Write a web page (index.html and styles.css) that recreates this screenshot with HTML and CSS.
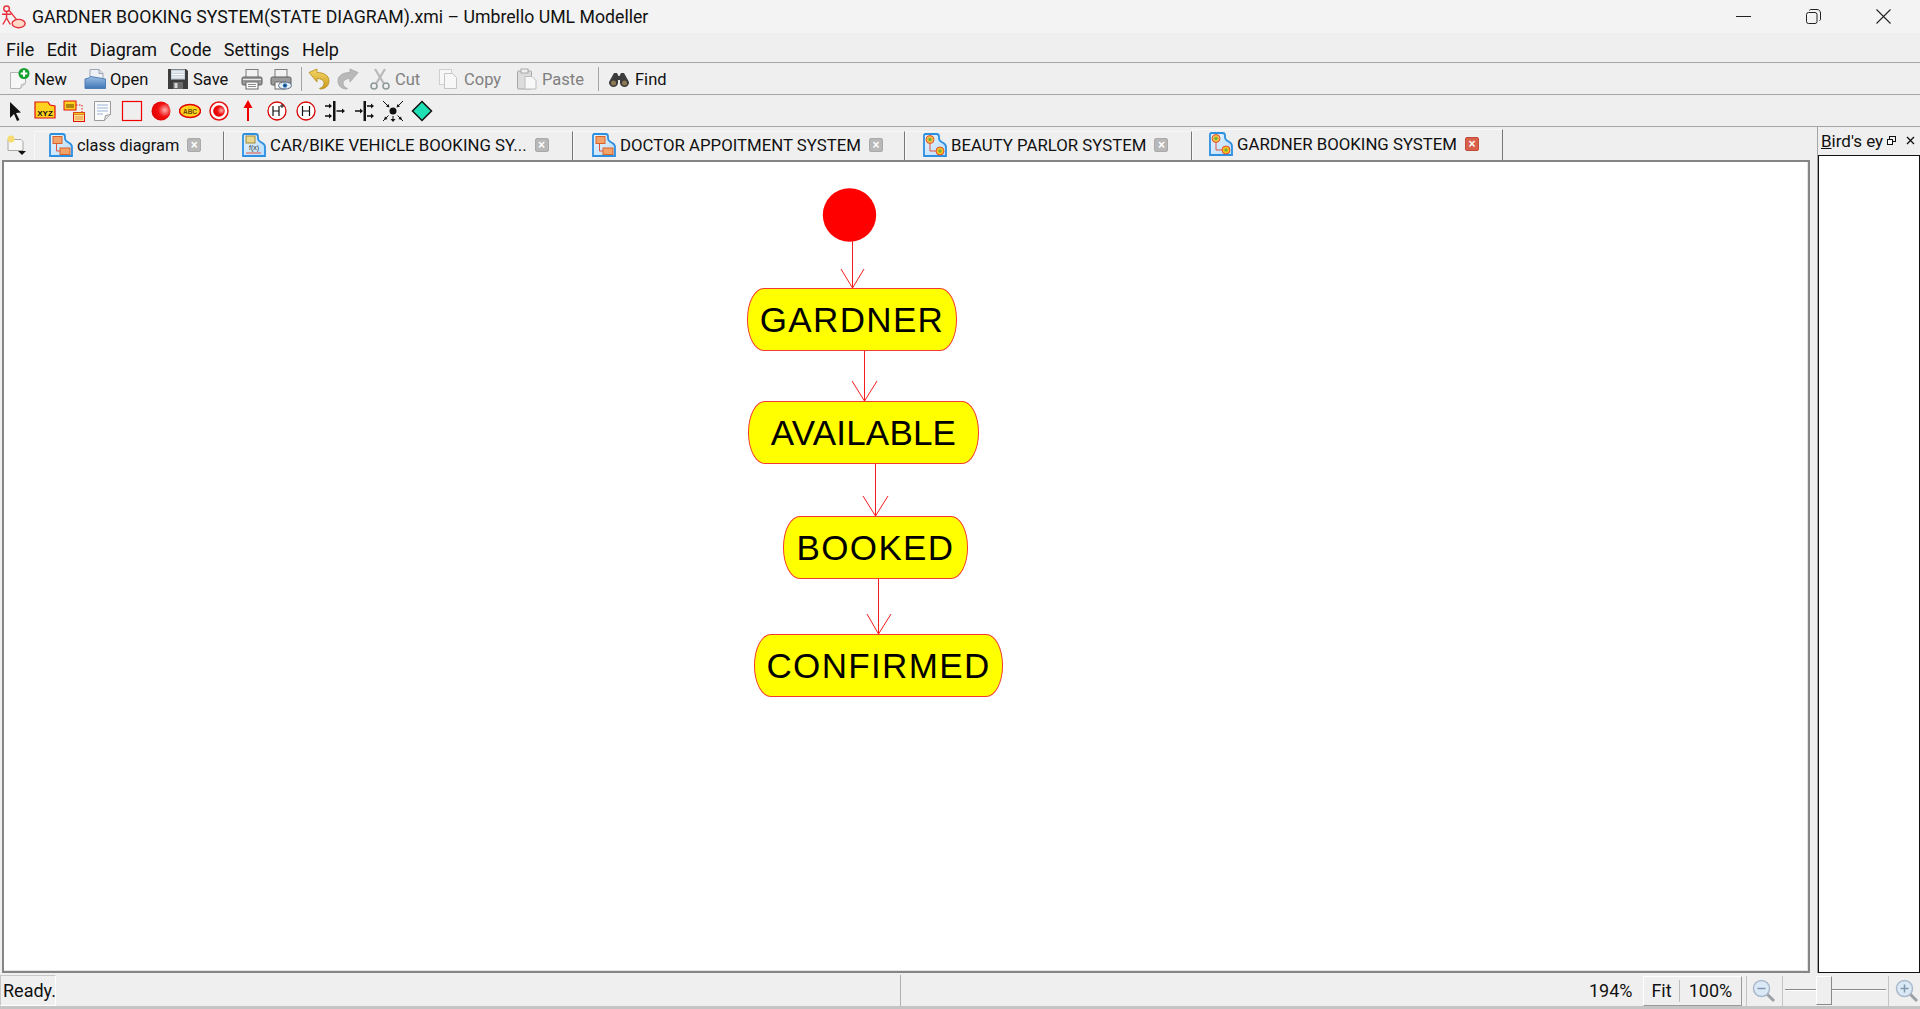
FILE: index.html
```html
<!DOCTYPE html>
<html lang="en">
<head>
    <meta charset="UTF-8">
    <title>GARDNER BOOKING SYSTEM(STATE DIAGRAM).xmi – Umbrello UML Modeller</title>
    <link rel="stylesheet" href="styles.css">
</head>
<body>
    <svg class="defs" width="0" height="0">
        <defs>
            <linearGradient id="folder" x1="0" y1="0" x2="0" y2="1"><stop offset="0" stop-color="#9cc0e6"/><stop offset="1" stop-color="#3f76b4"/></linearGradient>
            <linearGradient id="gold" x1="0" y1="0" x2="0" y2="1"><stop offset="0" stop-color="#f5d667"/><stop offset="1" stop-color="#c99a1c"/></linearGradient>
            <linearGradient id="sky" x1="0" y1="0" x2="1" y2="1"><stop offset="0" stop-color="#e8f4ff"/><stop offset="1" stop-color="#b8dcfa"/></linearGradient>
            <radialGradient id="ball" cx="0.7" cy="0.45" r="0.7"><stop offset="0" stop-color="#ffb0b0"/><stop offset="0.5" stop-color="#f01010"/><stop offset="1" stop-color="#e00000"/></radialGradient>
            <path id="doc-shape" d="M2 1h11.500c1.500 0 2.500 1 2.500 2.500v2c0 2 1.500 3 3.500 4 2 1 3.500 2 3.500 4.500v9H1V2z" fill="url(#sky)" stroke="#2c8fe0" stroke-width="1.800"/>
            <symbol id="i-new" viewBox="0 0 22 22"><path d="M2.500 4.500h11l4 4v7l-5 5h-10z" fill="#f7f7f7" stroke="#b5b5b5"/><path d="M12.500 20.500l1-4 4-1" fill="#e2e2e2" stroke="#b5b5b5"/><circle cx="16" cy="5.500" r="5.500" fill="#12a02c"/><path d="M16 2.200v6.600M12.700 5.500h6.600" stroke="#fff" stroke-width="2.200"/></symbol>
            <symbol id="i-open" viewBox="0 0 22 22"><path d="M6 1.500h9l4 4v9H6z" fill="#eef1f5" stroke="#9aa6b4"/><path d="M15 1.500v4h4" fill="#d5dce4" stroke="#9aa6b4"/><path d="M1 11l4-1 1.500-1.500 15 2.500v9.500H1z" fill="url(#folder)" stroke="#4f7fb6"/></symbol>
            <symbol id="i-save" viewBox="0 0 22 22"><path d="M1 1h18l2 2v18H1z" fill="#3d3d3d"/><rect x="4" y="1.500" width="14" height="10" fill="#c9d3dc"/><path d="M5 4h12M5 6.500h12M5 9h12" stroke="#fff"/><rect x="6" y="14" width="10" height="7" fill="#6a6a6a"/><rect x="7.500" y="15" width="3" height="5" fill="#d9d9d9"/></symbol>
            <symbol id="i-print" viewBox="0 0 22 22"><rect x="5" y="1.500" width="12" height="8" fill="#f2f2f2" stroke="#7d7d7d"/><rect x="1" y="9" width="20" height="8" rx="1.500" fill="#9a9a9a" stroke="#5d5d5d"/><path d="M2 11.500h18" stroke="#e8e8e8"/><rect x="5" y="14" width="12" height="7" fill="#fafafa" stroke="#6a6a6a"/><path d="M7 16.500h8M7 18.500h8" stroke="#8a8a8a"/></symbol>
            <symbol id="i-preview" viewBox="0 0 22 22"><rect x="5" y="1.500" width="12" height="8" fill="#f2f2f2" stroke="#7d7d7d"/><rect x="1" y="9" width="20" height="8" rx="1.500" fill="#9a9a9a" stroke="#5d5d5d"/><rect x="5" y="14" width="10" height="7" fill="#fafafa" stroke="#6a6a6a"/><ellipse cx="15" cy="17.500" rx="6.500" ry="3.500" fill="#e8f0f8" stroke="#536a82"/><circle cx="15" cy="17.500" r="2.300" fill="#2f7cc4"/><circle cx="15" cy="17.500" r=".9" fill="#10283f"/></symbol>
            <symbol id="i-undo" viewBox="0 0 22 22"><path d="M1 4.500l8-3.500v3.500c7 0 12 3 12 8.500 0 5-4 8-8.500 8l-1-.5c3-1 4.500-3 4.500-5.500s-3-4.500-7-4.500v3.500z" fill="url(#gold)" stroke="#b58a16" stroke-width=".8"/></symbol>
            <symbol id="i-redo" viewBox="0 0 22 22"><path d="M21 4.500l-8-3.500v3.500c-7 0-12 3-12 8.500 0 5 4 8 8.500 8l1-.5c-3-1-4.500-3-4.500-5.500s3-4.500 7-4.500v3.500z" fill="#b9b9b9" stroke="#a5a5a5" stroke-width=".8"/></symbol>
            <symbol id="i-cut" viewBox="0 0 22 22"><path d="M6 1l8.500 14M16 1L7.500 15" stroke="#b8b8b8" stroke-width="2.200" fill="none"/><circle cx="5" cy="18" r="3" fill="none" stroke="#8f9a9a" stroke-width="1.600"/><circle cx="17" cy="18" r="3" fill="none" stroke="#8f9a9a" stroke-width="1.600"/></symbol>
            <symbol id="i-copy" viewBox="0 0 22 22"><rect x="1.500" y="1.500" width="12" height="15" fill="#f7f7f7" stroke="#cfcfcf"/><path d="M6.500 5.500h8l4 4v11h-12z" fill="#f7f7f7" stroke="#c5c5c5"/></symbol>
            <symbol id="i-paste" viewBox="0 0 22 22"><rect x="1.500" y="3" width="14" height="18" rx="1" fill="#dcdcdc" stroke="#a8a8a8"/><rect x="5" y="1" width="7" height="4" fill="#f0f0f0" stroke="#a8a8a8"/><path d="M9 8.500h7l4 4v8.500H9z" fill="#f8f8f8" stroke="#bdbdbd"/></symbol>
            <symbol id="i-find" viewBox="0 0 22 22"><path d="M6 5h3l1.500 3h1L13 5h3l5 9a4.500 4.500 0 1 1-9 1v-3h-2v3a4.500 4.500 0 1 1-9-1z" fill="#3c3c3c"/><circle cx="5.500" cy="15" r="2.500" fill="#8d7a55"/><circle cx="16.500" cy="15" r="2.500" fill="#8d7a55"/></symbol>
            <symbol id="i-select" viewBox="0 0 22 22"><path d="M5 2l11 10.500-5 .5 3.500 7-2.500 1-3-7-4 4z" fill="#111"/></symbol>
            <symbol id="i-xyz" viewBox="0 0 22 22"><path d="M1 2h13l2 3 5 1v12H1z" fill="#ffd21e" stroke="#e01010" stroke-width="1.200"/><text x="11" y="15.500" class="xyz">XYZ</text></symbol>
            <symbol id="i-subflow" viewBox="0 0 22 22"><rect x="1" y="1" width="12" height="9" fill="#ffd21e" stroke="#e01010"/><rect x="10.500" y="12.500" width="11" height="9" fill="#ffe68a" stroke="#e01010"/><path d="M10.500 12.500h11v2h-11zM12 17h8M12 19h8" fill="#f3c320" stroke="#c03010" stroke-width=".5"/><path d="M13 5h6v7" fill="none" stroke="#e01010" stroke-dasharray="1.500 1.500"/><path d="M3 5h8M3 7h8" stroke="#5a3a00"/></symbol>
            <symbol id="i-note" viewBox="0 0 22 22"><path d="M2.500 1.500h16v13l-6 6h-10z" fill="#fbfbfb" stroke="#9a9a9a"/><path d="M12.500 20.500l1-5 5-1" fill="#dedede" stroke="#9a9a9a"/><path d="M5 5h11M5 8h11M5 11h11M5 14h6" stroke="#9cb6d8"/></symbol>
            <symbol id="i-box" viewBox="0 0 22 22"><rect x="1.500" y="1.500" width="19" height="19" fill="none" stroke="#f00000" stroke-width="1.200"/></symbol>
            <symbol id="i-initial" viewBox="0 0 22 22"><circle cx="11" cy="11" r="9.500" fill="url(#ball)"/></symbol>
            <symbol id="i-state" viewBox="0 0 22 22"><ellipse cx="11" cy="11" rx="10.500" ry="6.500" fill="#ffd21e" stroke="#e00000" stroke-width="1.500"/><text x="11" y="13.500" class="abc">ABC</text></symbol>
            <symbol id="i-end" viewBox="0 0 22 22"><circle cx="11" cy="11" r="9" fill="#fff" stroke="#e81010" stroke-width="1.500"/><circle cx="11" cy="11" r="5.800" fill="url(#ball)"/></symbol>
            <symbol id="i-arrow" viewBox="0 0 22 22"><path d="M11 21V4" stroke="#f00000" stroke-width="2"/><path d="M11 0l4.500 8h-9z" fill="#f00000"/></symbol>
            <symbol id="i-hdeep" viewBox="0 0 22 22"><circle cx="11" cy="11" r="9" fill="#fff" stroke="#d80000" stroke-width="1.300"/><path d="M7 6v10M13 6v10M7 11h6" stroke="#111" stroke-width="1.200"/><path d="M16 4v4M14 6h4" stroke="#111"/></symbol>
            <symbol id="i-hist" viewBox="0 0 22 22"><circle cx="11" cy="11" r="9" fill="#fff" stroke="#d80000" stroke-width="1.300"/><path d="M7.500 6v10M14.500 6v10M7.500 11h7" stroke="#111" stroke-width="1.200"/></symbol>
            <symbol id="i-fork" viewBox="0 0 22 22"><rect x="9" y="1" width="2.500" height="20" fill="#111"/><path d="M1 6h6M1 16h6M12.500 11h6" stroke="#111" stroke-width="1.300"/><path d="M8 6l-3-2.500v5zM8 16l-3-2.500v5zM21 11l-3-2.500v5z" fill="#111"/></symbol>
            <symbol id="i-join" viewBox="0 0 22 22"><rect x="10.500" y="1" width="2.500" height="20" fill="#111"/><path d="M2 11h6M14 6h5M14 16h5" stroke="#111" stroke-width="1.300"/><path d="M10 11l-3-2.500v5zM21 6l-3-2.500v5zM21 16l-3-2.500v5z" fill="#111"/></symbol>
            <symbol id="i-junction" viewBox="0 0 22 22"><circle cx="11" cy="11" r="3.500" fill="#111"/><path d="M1 1l5.500 5.500M21 1l-5.500 5.500M1 21l5.500-5.500M21 21l-5.500-5.500M11 16v5" stroke="#111"/><path d="M7.500 7.500l-3.500-1 2.500-2.500zM14.500 7.500l1-3.500 2.500 2.500zM2 20l1-3.500 2.500 2.500zM20 20l-3.500-1 2.500-2.500zM11 22l-2.500-3h5z" fill="#111"/></symbol>
            <symbol id="i-branch" viewBox="0 0 22 22"><path d="M11 1.500l9.500 9.500-9.500 9.500L1.500 11z" fill="#1fe0b4" stroke="#111" stroke-width="1.500"/></symbol>
            <symbol id="i-diagram" viewBox="0 0 24 24"><use href="#doc-shape"/><rect x="4" y="3.500" width="9" height="7" fill="#f2a36a" stroke="#d9622b"/><rect x="11" y="15" width="10" height="6.500" fill="#f2a36a" stroke="#d9622b"/><path d="M7.500 10.500v7.500h3.500" fill="none" stroke="#e0503c"/></symbol>
            <symbol id="i-diagram-seq" viewBox="0 0 24 24"><use href="#doc-shape"/><rect x="4" y="3" width="9" height="7" fill="#e8d890" stroke="#a08838"/><text x="12" y="17" class="fx">f(x)</text><path d="M4 20h15" stroke="#e0503c"/></symbol>
            <symbol id="i-diagram-state" viewBox="0 0 24 24"><use href="#doc-shape"/><circle cx="7" cy="6.500" r="4" fill="#f2c048" stroke="#e05030"/><circle cx="7" cy="6.500" r="1.700" fill="#7ab030"/><path d="M7 10.500v7.500h6" fill="none" stroke="#e0503c"/><circle cx="17" cy="18" r="4" fill="#f8c020" stroke="#e05030"/><circle cx="17" cy="18" r="1.700" fill="#7ab030"/></symbol>
            <symbol id="i-zoomout" viewBox="0 0 24 24"><path d="M14 14l8 8" stroke="#9aa0a6" stroke-width="3"/><circle cx="9.500" cy="9.500" r="8" fill="#dbe8f5" stroke="#a9b9cc" stroke-width="1.500"/><path d="M5.500 9.500h8" stroke="#8096b0" stroke-width="1.500"/></symbol>
            <symbol id="i-zoomin" viewBox="0 0 24 24"><path d="M14 14l8 8" stroke="#9aa0a6" stroke-width="3"/><circle cx="9.500" cy="9.500" r="8" fill="#dbe8f5" stroke="#a9b9cc" stroke-width="1.500"/><path d="M5.500 9.500h8M9.500 5.500v8" stroke="#8096b0" stroke-width="1.500"/></symbol>
        </defs>
    </svg>

    <header class="titlebar">
        <svg class="app-icon" viewBox="0 0 28 28"><circle cx="6" cy="4" r="3" fill="none" stroke="#e8303a" stroke-width="1.500"/><path d="M6 7v7M1 10h10M6 14l-4 7M6 14l4 7M9 6l8 10" stroke="#e8303a" stroke-width="1.500" fill="none"/><ellipse cx="19" cy="20" rx="7" ry="4.500" fill="#ffd9c8" stroke="#e8303a" stroke-width="1.500"/></svg>
        <span class="title-text">GARDNER BOOKING SYSTEM(STATE DIAGRAM).xmi – Umbrello UML Modeller</span>
        <div class="win-controls">
            <svg class="win-min" viewBox="0 0 15 15"><path d="M0 7.500h15" stroke="#222"/></svg>
            <svg class="win-max" viewBox="0 0 15 15"><rect x=".5" y="3.500" width="10.500" height="11" rx="2" fill="none" stroke="#222"/><path d="M3.500 1.500c0-.6.500-1 1-1h6.500c2 0 3.500 1.500 3.500 3.500v6.500c0 .5-.4 1-1 1" fill="none" stroke="#222"/></svg>
            <svg class="win-close" viewBox="0 0 15 15"><path d="M.5.500l14 14M14.500.500l-14 14" stroke="#222" stroke-width="1.100"/></svg>
        </div>
    </header>

    <nav class="menubar">
        <span class="menu-item">File</span>
        <span class="menu-item">Edit</span>
        <span class="menu-item">Diagram</span>
        <span class="menu-item">Code</span>
        <span class="menu-item">Settings</span>
        <span class="menu-item">Help</span>
    </nav>

    <div class="toolbar main-tools">
        <span class="tool t-new"><svg class="ico"><use href="#i-new"/></svg>New</span>
        <span class="tool t-open"><svg class="ico"><use href="#i-open"/></svg>Open</span>
        <span class="tool t-save"><svg class="ico"><use href="#i-save"/></svg>Save</span>
        <span class="tool t-icon"><svg class="ico"><use href="#i-print"/></svg></span>
        <span class="tool t-icon"><svg class="ico"><use href="#i-preview"/></svg></span>
        <span class="tool-sep"></span>
        <span class="tool t-icon"><svg class="ico"><use href="#i-undo"/></svg></span>
        <span class="tool t-icon"><svg class="ico"><use href="#i-redo"/></svg></span>
        <span class="tool t-cut off"><svg class="ico"><use href="#i-cut"/></svg>Cut</span>
        <span class="tool t-copy off"><svg class="ico"><use href="#i-copy"/></svg>Copy</span>
        <span class="tool t-paste off"><svg class="ico"><use href="#i-paste"/></svg>Paste</span>
        <span class="tool-sep"></span>
        <span class="tool t-find"><svg class="ico"><use href="#i-find"/></svg>Find</span>
    </div>

    <div class="toolbar shape-tools">
        <span class="shape"><svg class="ico"><use href="#i-select"/></svg></span>
        <span class="shape"><svg class="ico"><use href="#i-xyz"/></svg></span>
        <span class="shape"><svg class="ico"><use href="#i-subflow"/></svg></span>
        <span class="shape"><svg class="ico"><use href="#i-note"/></svg></span>
        <span class="shape"><svg class="ico"><use href="#i-box"/></svg></span>
        <span class="shape"><svg class="ico"><use href="#i-initial"/></svg></span>
        <span class="shape"><svg class="ico"><use href="#i-state"/></svg></span>
        <span class="shape"><svg class="ico"><use href="#i-end"/></svg></span>
        <span class="shape"><svg class="ico"><use href="#i-arrow"/></svg></span>
        <span class="shape"><svg class="ico"><use href="#i-hdeep"/></svg></span>
        <span class="shape"><svg class="ico"><use href="#i-hist"/></svg></span>
        <span class="shape"><svg class="ico"><use href="#i-fork"/></svg></span>
        <span class="shape"><svg class="ico"><use href="#i-join"/></svg></span>
        <span class="shape"><svg class="ico"><use href="#i-junction"/></svg></span>
        <span class="shape"><svg class="ico"><use href="#i-branch"/></svg></span>
    </div>

    <main class="workspace">
        <section class="editor">
            <div class="tabbar">
                <span class="new-tab">
                    <svg viewBox="0 0 22 22"><path d="M3 5.500h13l2 2v9H3z" fill="#f7f7f5" stroke="#a8a8a8"/><circle cx="6" cy="5" r="3.500" fill="#f6dc70"/><path d="M13 17h8l-4 4z" fill="#111"/></svg>
                </span>
                <div class="tab tab-1"><svg class="tab-ico"><use href="#i-diagram"/></svg><span>class diagram</span><i class="tab-x">×</i></div>
                <div class="tab tab-2"><svg class="tab-ico"><use href="#i-diagram-seq"/></svg><span>CAR/BIKE VEHICLE BOOKING SY...</span><i class="tab-x">×</i></div>
                <div class="tab tab-3"><svg class="tab-ico"><use href="#i-diagram"/></svg><span>DOCTOR APPOITMENT SYSTEM</span><i class="tab-x">×</i></div>
                <div class="tab tab-4"><svg class="tab-ico"><use href="#i-diagram-state"/></svg><span>BEAUTY PARLOR SYSTEM</span><i class="tab-x">×</i></div>
                <div class="tab tab-5 active"><svg class="tab-ico"><use href="#i-diagram-state"/></svg><span>GARDNER BOOKING SYSTEM</span><i class="tab-x">×</i></div>
            </div>
            <div class="canvas">
                <svg class="links" width="1802" height="810" viewBox="4 162 1802 810">
                    <circle cx="849.500" cy="215" r="26.700" fill="#f00"/>
                    <path d="M852.500 241V288M841 269L852.500 288L864 269"/>
                    <path d="M864.500 351V401M852 381L864.500 401L877 381"/>
                    <path d="M875.500 463V516M863 496L875.500 516L888 496"/>
                    <path d="M878.500 578V634M867 614L878.500 634L891 614"/>
                </svg>
                <div class="state st-gardner">GARDNER</div>
                <div class="state st-available">AVAILABLE</div>
                <div class="state st-booked">BOOKED</div>
                <div class="state st-confirmed">CONFIRMED</div>
            </div>
        </section>
        <aside class="dock">
            <div class="dock-head">
                <span class="dock-title"><u>B</u>ird's ey</span>
                <svg class="dock-float" viewBox="0 0 9 9"><rect x="2.500" y=".5" width="6" height="5" fill="none" stroke="#111"/><rect x=".5" y="3.500" width="5" height="5" fill="#fff" stroke="#111"/></svg>
                <svg class="dock-close" viewBox="0 0 9 9"><path d="M1 1l7 7M8 1L1 8" stroke="#111" stroke-width="1.300"/></svg>
            </div>
            <div class="birdview"></div>
        </aside>
    </main>

    <footer class="statusbar">
        <span class="status-msg">Ready.</span>
        <span class="status-gap"></span>
        <span class="status-fill"></span>
        <span class="zoom-pct">194%</span>
        <div class="zoom-btns"><span class="zb-fit">Fit</span><span class="zb-full">100%</span></div>
        <span class="zoom-ico zi-out"><svg><use href="#i-zoomout"/></svg></span>
        <div class="slider"><span class="slider-handle"></span></div>
        <span class="zoom-ico zi-in"><svg><use href="#i-zoomin"/></svg></span>
    </footer>
</body>
</html>
```

FILE: styles.css
```css
html, body {
    margin: 0;
    height: 100%;
    overflow: hidden;
}
body {
    display: flex;
    flex-direction: column;
    background: #efefef;
    color: #111;
    font-family: Roboto, "Noto Sans", sans-serif;
    font-size: 16.500px;
}
.defs {
    position: absolute;
}
.xyz {
    font: bold 8px "Liberation Sans", sans-serif;
    text-anchor: middle;
    fill: #111;
}
.abc {
    font: bold 6.500px "Liberation Sans", sans-serif;
    text-anchor: middle;
    fill: #6a4a00;
}
.fx {
    font: 7px "Liberation Sans", sans-serif;
    text-anchor: middle;
    fill: #333;
}

/* title bar */
.titlebar {
    height: 33px;
    display: flex;
    align-items: center;
    background: #f3f3f3;
    flex: none;
}
.app-icon {
    width: 26px;
    height: 26px;
    margin: 2px 5px 0 1px;
}
.title-text {
    font-size: 17.700px;
}
.win-controls {
    margin-left: auto;
    display: flex;
    align-items: center;
    padding-right: 29px;
}
.win-controls svg {
    width: 15px;
    height: 15px;
}
.win-min {
    margin-right: 55px;
}
.win-max {
    margin-right: 55px;
}

/* menu */
.menubar {
    height: 30px;
    flex: none;
    display: flex;
    align-items: center;
    border-bottom: 1px solid #a5a5a5;
    box-sizing: border-box;
    padding-left: 6px;
    padding-top: 3px;
}
.menu-item {
    margin-right: 12.500px;
    font-size: 18px;
}

/* toolbars */
.toolbar {
    height: 32px;
    flex: none;
    box-sizing: border-box;
    display: flex;
    align-items: center;
    border-bottom: 1px solid #a5a5a5;
    padding-top: 1px;
}
.ico {
    width: 22px;
    height: 22px;
    flex: none;
}
.main-tools {
    padding-left: 8px;
}
.tool {
    display: flex;
    align-items: center;
    gap: 4px;
    flex: none;
}
.t-new { width: 76px; }
.t-open { width: 83px; }
.t-save { width: 74px; }
.t-icon { width: 29px; }
.t-cut { width: 69px; margin-left: 3px; }
.t-copy { width: 78px; }
.t-paste { width: 80px; }
.t-find { width: 70px; margin-left: 3px; gap: 5px; }
.off {
    color: #808080;
}
.tool-sep {
    width: 1px;
    height: 24px;
    background: #a5a5a5;
    margin: 0 6px 0 2px;
}
.shape-tools {
    padding-left: 1px;
}
.shape {
    width: 29px;
    display: flex;
    justify-content: center;
}

/* workspace */
.workspace {
    flex: 1;
    display: flex;
    min-height: 0;
}
.editor {
    width: 1818px;
    display: flex;
    flex-direction: column;
    border-right: 1px solid #a5a5a5;
    box-sizing: border-box;
    flex: none;
}
.tabbar {
    height: 33px;
    flex: none;
    display: flex;
    align-items: flex-end;
}
.new-tab {
    width: 34px;
    height: 31px;
    flex: none;
    display: flex;
    align-items: center;
    padding-left: 5px;
    box-sizing: border-box;
}
.new-tab svg {
    width: 22px;
    height: 22px;
}
.tab {
    height: 29px;
    display: flex;
    align-items: center;
    box-sizing: border-box;
    border-top: 1px solid #f8f8f8;
    border-left: 1px solid #f8f8f8;
    border-right: 1px solid #777;
    flex: none;
    font-size: 16.800px;
    padding-bottom: 2px;
}
.tab-ico {
    width: 24px;
    height: 24px;
    flex: none;
    margin-right: 4px;
}
.tab-1 { width: 190px; padding-left: 14px; font-size: 16.400px; }
.tab-2 { width: 349px; padding-left: 17px; }
.tab-3 { width: 332px; padding-left: 18px; }
.tab-4 { width: 287px; padding-left: 17px; }
.tab-5 { width: 311px; padding-left: 16px; height: 31px; padding-bottom: 2px; }
.tab-x {
    width: 14px;
    height: 14px;
    margin-left: 8px;
    background: #b8b8b8;
    border: 1px solid #aaa;
    border-radius: 2px;
    box-sizing: border-box;
    color: #fff;
    font: bold 12px/12px "Liberation Sans", sans-serif;
    text-align: center;
}
.active .tab-x {
    background: #d9604a;
    border-color: #c04a36;
}
.canvas {
    flex: 1;
    position: relative;
    background: #fff;
    margin-left: 2px;
    margin-right: 7px;
    border: 2px solid #858585;
    box-shadow: inset -1px -1px 0 #e4e4e4;
}
.links {
    position: absolute;
    left: 0;
    top: 0;
}
.links path {
    fill: none;
    stroke: #f81c1c;
    stroke-width: 1;
}

/* states sit at their spot on the diagram */
.state {
    position: absolute;
    box-sizing: border-box;
    background: #ff0;
    border: 1px solid #f33a30;
    border-radius: 17px / 31px;
    display: flex;
    align-items: center;
    justify-content: center;
    font-family: "Liberation Sans", Arial, sans-serif;
    font-size: 35px;
    letter-spacing: 1.350px;
    color: #000;
    height: 63px;
}
.st-gardner { left: 743px; top: 126px; width: 210px; }
.st-available { left: 744px; top: 239px; width: 231px; letter-spacing: .2px; }
.st-booked { left: 779px; top: 354px; width: 185px; }
.st-confirmed { left: 750px; top: 472px; width: 249px; }

/* bird's eye dock */
.dock {
    flex: 1;
    display: flex;
    flex-direction: column;
    background: #efefef;
}
.dock-head {
    height: 28px;
    display: flex;
    align-items: center;
    padding-left: 3px;
    flex: none;
}
.dock-title {
    font-size: 17px;
    width: 64px;
    overflow: hidden;
    white-space: nowrap;
}
.dock-float {
    width: 9px;
    height: 9px;
    margin-left: 2px;
    margin-bottom: 2px;
}
.dock-close {
    width: 9px;
    height: 9px;
    margin-left: 10px;
    margin-bottom: 2px;
}
.birdview {
    flex: 1;
    background: #fff;
    border: 1px solid #111;
}

/* status bar */
.statusbar {
    height: 36px;
    flex: none;
    display: flex;
    align-items: center;
    box-sizing: border-box;
    padding-top: 2px;
    border-bottom: 3px solid #c4c4c4;
    font-size: 18px;
}
.status-msg {
    width: 56px;
    flex: none;
    box-sizing: border-box;
    height: 31px;
    line-height: 30px;
    padding-left: 2px;
    border: 1px solid #c8c8c8;
    border-right-color: #fff;
    border-bottom-color: #fff;
}
.status-gap {
    width: 844px;
    flex: none;
}
.status-fill {
    flex: 1;
    height: 31px;
    border-left: 1px solid #b0b0b0;
    box-sizing: border-box;
}
.zoom-pct {
    width: 54px;
    flex: none;
}
.zoom-btns {
    width: 99px;
    height: 30px;
    flex: none;
    box-sizing: border-box;
    border: 1px solid #fff;
    border-right-color: #9a9a9a;
    border-bottom-color: #9a9a9a;
    display: flex;
    align-items: center;
}
.zb-fit {
    width: 35px;
    text-align: center;
    border-right: 1px solid #bdbdbd;
    line-height: 22px;
}
.zb-full {
    flex: 1;
    text-align: center;
}
.zoom-ico {
    height: 30px;
    box-sizing: border-box;
    border-left: 1px solid #c4c4c4;
    display: flex;
    align-items: center;
    flex: none;
}
.zi-out {
    width: 36px;
    margin-left: 4px;
    padding-left: 5px;
}
.zi-in {
    width: 32px;
    padding-left: 6px;
}
.zoom-ico svg {
    width: 24px;
    height: 24px;
}
.slider {
    width: 106px;
    height: 30px;
    position: relative;
    box-sizing: border-box;
    border-left: 1px solid #c4c4c4;
    flex: none;
}
.slider::before {
    content: "";
    position: absolute;
    left: 2px;
    right: 2px;
    top: 13px;
    height: 1px;
    background: #8a8a8a;
    border-bottom: 1px solid #fff;
}
.slider-handle {
    position: absolute;
    left: 33px;
    top: 0;
    width: 16px;
    height: 29px;
    background: #efefef;
    box-sizing: border-box;
    border: 1px solid #fff;
    border-right-color: #8a8a8a;
    border-bottom-color: #8a8a8a;
}
```
